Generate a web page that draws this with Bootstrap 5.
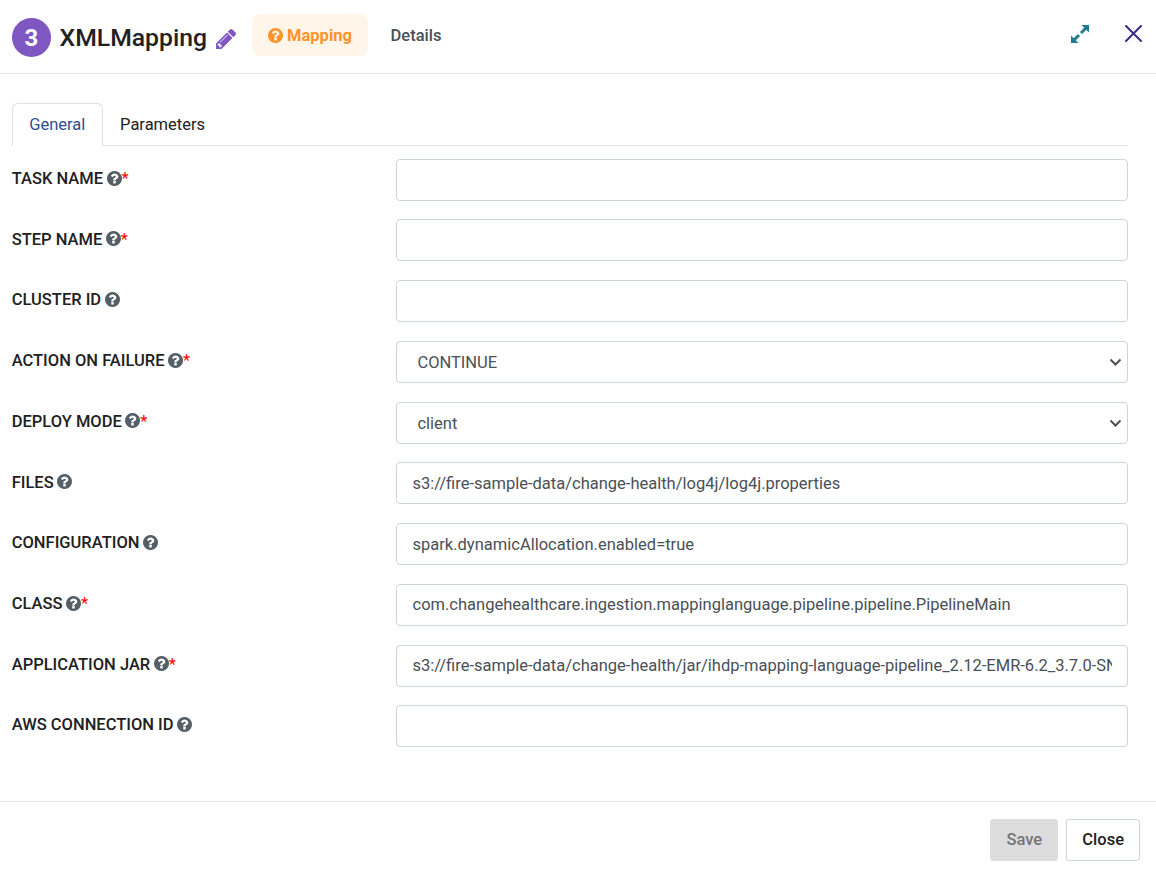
<!DOCTYPE html>
<html lang="en">
<head>
<meta charset="utf-8">
<meta name="viewport" content="width=device-width, initial-scale=1">
<title>XMLMapping</title>
<link href="https://cdn.jsdelivr.net/npm/bootstrap@5.3.0/dist/css/bootstrap.min.css" rel="stylesheet">
<style>
body{font-family:Roboto,"Liberation Sans",sans-serif;font-size:16.5px;color:#212121;background:#fff}
.dialog{height:870px}
.dialog-head{height:74px;border-bottom:1px solid #e5e7e9;padding-left:12px}
.step-num{width:39px;height:39px;background:#7e57c2;font-size:24px;font-weight:700;margin-top:2px}
.dialog-title{font-size:24.75px;font-weight:500;line-height:30px;margin:3px 0 0 8.5px}
.edit-icon{width:20px;height:20px;margin:4px 0 0 9px;color:#7e57c2}
.pill{height:42px;border-radius:8px;font-weight:500;padding:2px 16px 0;margin-top:-3px}
.pill-active{background:#fff6e9;color:#ff922b;font-weight:700;width:116px;margin-left:16px;white-space:nowrap}
.pill-plain{color:#495057;margin-left:6.5px}
.q{width:15px;height:15px;flex:none}
.pill .q{margin-top:-2px}
.head-actions{padding-right:14px;margin-top:-6px;gap:36px}
.main-area{padding:29px 28px 0 12px}
.nav-tabs{height:43px;--bs-nav-tabs-border-color:#dee2e6;--bs-nav-link-color:#212121}
.nav-tabs .nav-link{height:43px;padding:0 16.6px 0 16.2px;line-height:41px;color:#212121}
.nav-tabs .nav-link.active{color:#2f4f91}
.fields{padding-top:12.75px;gap:18.72px}
.frow{height:42px}
.frow label{width:384px;font-weight:500;height:41.2px;padding-right:8px;margin-left:-.3px;margin-right:.3px}
.frow label .q{color:#555f68;margin:-2.5px 0 0 3.5px}
.req{color:#f00;font-weight:400}
.frow .form-control,.frow .form-select{height:42px;border-color:#ced4da;border-radius:4px;padding:0 15.5px;font-size:16.5px;color:#495057}
.frow .form-select{padding:2.6px 20px 0 20.4px;background-position:right 4px center;background-size:15px 15px;background-image:url("data:image/svg+xml,%3csvg xmlns='http://www.w3.org/2000/svg' viewBox='0 0 15 15'%3e%3cpath fill='none' stroke='%23495057' stroke-width='2' d='M2.5 5.500l5 5 5-5'/%3e%3c/svg%3e")}
.dialog-foot{height:69px;border-top:1px solid #e5e7e9;padding:17px 16px 0 0;gap:8px}
.dialog-foot .btn{height:42px;padding:0 15px;border-radius:3px;font-size:16.5px;font-weight:500}
.dialog-foot .btn-save{width:68px}
.btn-save,.btn-save:disabled{background:#ddd;border-color:#ddd;color:#747474;opacity:1}
.btn-close-dlg{background:#fff;border-color:#ced4da;color:#212121}
</style>
</head>
<body>
<svg class="d-none" xmlns="http://www.w3.org/2000/svg">
<symbol id="q" viewBox="128 128 1536 1536"><path fill="currentColor" d="M1024 1376v-192q0-14-9-23t-23-9h-192q-14 0-23 9t-9 23v192q0 14 9 23t23 9h192q14 0 23-9t9-23zM1280 704q0-88-55.500-163t-138.500-116-170-41q-243 0-371 213-15 24 8 42l132 100q7 6 19 6 16 0 25-12 53-68 86-92 34-24 86-24 48 0 85.500 26t37.500 59q0 38-20 61t-68 45q-63 28-115.500 86.500t-52.500 125.500v36q0 14 9 23t23 9h192q14 0 23-9t9-23q0-19 21.500-49.500t54.500-49.500q32-18 49-28.500t46-35 44.500-48 28-60.500 12.500-81zM1664 896q0 209-103 385.500t-279.500 279.500-385.500 103-385.500-103-279.500-279.500-103-385.500 103-385.500 279.500-279.500 385.500-103 385.500 103 279.500 279.500 103 385.500z"/></symbol>
</svg>
<div class="dialog d-flex flex-column">
<header class="dialog-head d-flex align-items-center">
<span class="step-num rounded-circle d-flex align-items-center justify-content-center text-white">3</span>
<h1 class="dialog-title">XMLMapping</h1>
<svg class="edit-icon" viewBox="128 149 1515 1515"><path fill="currentColor" d="M491 1536l91-91-235-235-91 91v107h128v128h107zm523-928q0-22-22-22-10 0-17 7l-542 542q-7 7-7 17 0 22 22 22 10 0 17-7l542-542q7-7 7-17zm-54-192l416 416-832 832h-416v-416zm683 96q0 53-37 90l-166 166-416-416 166-165q36-38 90-38 53 0 91 38l235 234q37 39 37 91z"/></svg>
<a class="pill pill-active d-flex align-items-center text-decoration-none" href="#"><svg class="q me-1"><use href="#q"/></svg>Mapping</a>
<a class="pill pill-plain d-flex align-items-center text-decoration-none" href="#">Details</a>
<div class="head-actions d-flex align-items-center ms-auto">
<svg width="18" height="18" viewBox="0 0 18 18" fill="#247a92" stroke="#247a92"><path stroke="none" d="M10.500 0H18v7.500zM0 10.500V18h7.500z"/><path fill="none" stroke-width="3" d="M15 3l-5 5M8 10l-5 5"/></svg>
<svg width="17" height="17" viewBox="0 0 17 17" fill="none" stroke="#3c2a8c" stroke-width="2" stroke-linecap="round"><path d="M1 1l15 15M16 1L1 16"/></svg>
</div>
</header>
<main class="main-area flex-grow-1">
<ul class="nav nav-tabs">
<li class="nav-item"><a class="nav-link active" href="#">General</a></li>
<li class="nav-item"><a class="nav-link" href="#">Parameters</a></li>
</ul>
<form class="fields d-flex flex-column">
<div class="frow d-flex"><label class="d-flex align-items-center flex-shrink-0">TASK NAME <svg class="q"><use href="#q"/></svg><span class="req">*</span></label><input class="form-control"></div>
<div class="frow d-flex"><label class="d-flex align-items-center flex-shrink-0">STEP NAME <svg class="q"><use href="#q"/></svg><span class="req">*</span></label><input class="form-control"></div>
<div class="frow d-flex"><label class="d-flex align-items-center flex-shrink-0">CLUSTER ID <svg class="q"><use href="#q"/></svg></label><input class="form-control"></div>
<div class="frow d-flex"><label class="d-flex align-items-center flex-shrink-0">ACTION ON FAILURE <svg class="q"><use href="#q"/></svg><span class="req">*</span></label><select class="form-select"><option>CONTINUE</option></select></div>
<div class="frow d-flex"><label class="d-flex align-items-center flex-shrink-0">DEPLOY MODE <svg class="q"><use href="#q"/></svg><span class="req">*</span></label><select class="form-select"><option>client</option></select></div>
<div class="frow d-flex"><label class="d-flex align-items-center flex-shrink-0">FILES <svg class="q"><use href="#q"/></svg></label><input class="form-control" value="s3://fire-sample-data/change-health/log4j/log4j.properties"></div>
<div class="frow d-flex"><label class="d-flex align-items-center flex-shrink-0">CONFIGURATION <svg class="q"><use href="#q"/></svg></label><input class="form-control" value="spark.dynamicAllocation.enabled=true"></div>
<div class="frow d-flex"><label class="d-flex align-items-center flex-shrink-0">CLASS <svg class="q"><use href="#q"/></svg><span class="req">*</span></label><input class="form-control" value="com.changehealthcare.ingestion.mappinglanguage.pipeline.pipeline.PipelineMain"></div>
<div class="frow d-flex"><label class="d-flex align-items-center flex-shrink-0">APPLICATION JAR <svg class="q"><use href="#q"/></svg><span class="req">*</span></label><input class="form-control" value="s3://fire-sample-data/change-health/jar/ihdp-mapping-language-pipeline_2.12-EMR-6.2_3.7.0-SNAPSHOT.jar"></div>
<div class="frow d-flex"><label class="d-flex align-items-center flex-shrink-0">AWS CONNECTION ID <svg class="q"><use href="#q"/></svg></label><input class="form-control"></div>
</form>
</main>
<footer class="dialog-foot d-flex justify-content-end">
<button class="btn btn-save" type="button" disabled>Save</button>
<button class="btn btn-close-dlg" type="button">Close</button>
</footer>
</div>
</body>
</html>
